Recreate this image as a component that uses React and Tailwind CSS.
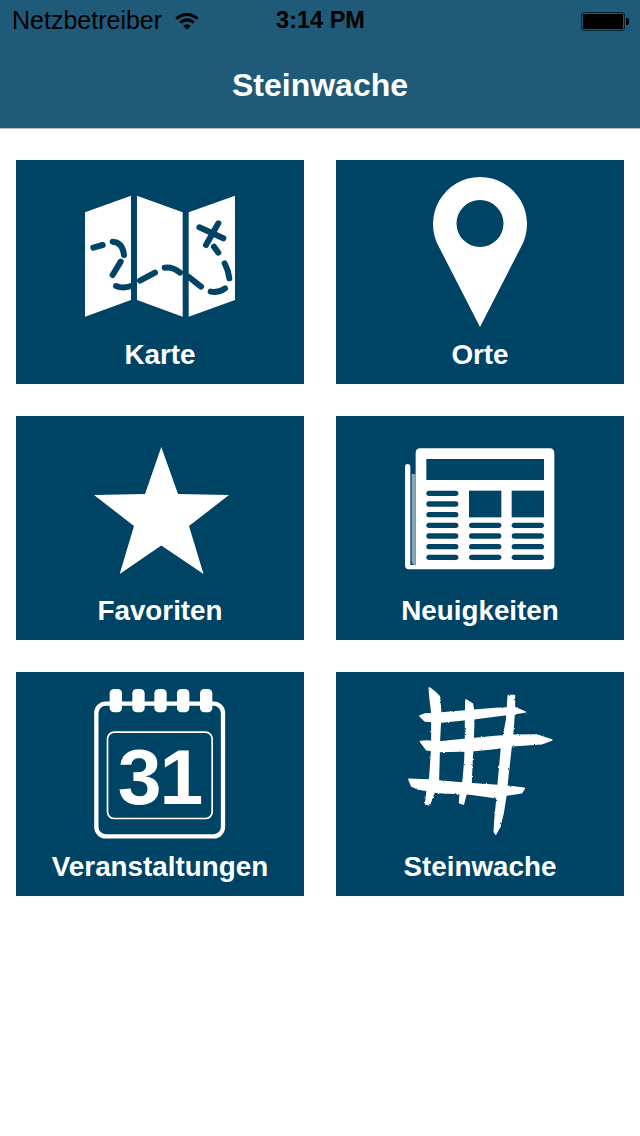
import React from 'react';

const font = "font-['Liberation_Sans',Arial,sans-serif]";

function MapIcon() {
  return (
    <svg viewBox="0 0 540 450" className="w-[180px] h-[150px] mt-[20px]">
      <polygon fill="#fff" points="45,97 183,47 183,360 45,410" />
      <polygon fill="#fff" points="201,47 338,97 338,410 201,360" />
      <polygon fill="#fff" points="356,97 495,47 495,360 356,410" />
      <g fill="none" stroke="#004465" strokeWidth="18" strokeLinecap="round">
        <path d="M70 203L98 195" />
        <path d="M128 185Q158 187 162 225" />
        <path d="M152 245L128 285" />
        <path d="M138 318Q160 328 190 316" />
        <path d="M210 302L255 278" />
        <path d="M284 263Q308 260 330 278" />
        <path d="M355 290L393 320" />
        <path d="M422 335Q445 340 465 325" />
        <path d="M478 295Q475 270 464 250" />
        <path d="M445 218L432 200" />
        <path d="M388 142L460 175" />
        <path d="M445 130L408 195" />
      </g>
    </svg>
  );
}

function PinIcon() {
  return (
    <svg viewBox="0 0 94 150" className="w-[94px] h-[150px] mt-[17px]">
      <path
        fill="#fff"
        fillRule="evenodd"
        d="M47 150L6 70A47 47 0 1 1 88 70ZM47 23A23.500 23.500 0 1 0 47 70A23.500 23.500 0 1 0 47 23Z"
      />
    </svg>
  );
}

function StarIcon() {
  return (
    <svg viewBox="94 447 135 127" className="w-[135px] h-[127px] mt-[31px] ml-[3px]">
      <polygon
        fill="#fff"
        points="161.300,447 178,494 229,495 189,526 203.500,574 161.300,545.500 119.700,574 134,526 94,495 145,494"
      />
    </svg>
  );
}

function NewsIcon() {
  const leftLines = [152, 184, 216, 248, 280, 312, 344];
  const sideLines = [248, 280, 312, 344];
  return (
    <svg viewBox="0 0 510 420" className="w-[170px] h-[140px] mt-[24px]">
      <path
        fill="#fff"
        d="M38 72Q46 72 46 80V375H62V39Q62 25 76 25H464Q478 25 478 39V376Q478 388 466 388H42Q30 388 30 376V80Q30 72 38 72Z"
      />
      <path fill="#8ba8b9" d="M50 102H62V375Q50 375 50 363Z" />
      <g fill="#004465">
        <rect x="94" y="57" width="353" height="63" />
        <rect x="222" y="152" width="97" height="80" />
        <rect x="350" y="152" width="97" height="80" />
        {leftLines.map((y) => (
          <rect key={y} x="94" y={y} width="96" height="16" rx="8" />
        ))}
        {sideLines.map((y) => (
          <rect key={y} x="222" y={y} width="97" height="16" rx="8" />
        ))}
        {sideLines.map((y) => (
          <rect key={y} x="350" y={y} width="97" height="16" rx="8" />
        ))}
      </g>
    </svg>
  );
}

function CalendarIcon() {
  const rings = [74, 142, 208, 276, 345];
  return (
    <svg viewBox="0 0 450 510" className="w-[150px] h-[170px] mt-[8px]">
      <rect x="34" y="71" width="380" height="398" rx="28" fill="none" stroke="#fff" strokeWidth="13" />
      <rect x="67.500" y="156.500" width="314" height="259" rx="20" fill="none" stroke="#fff" strokeWidth="5" />
      {rings.map((x) => (
        <rect key={x} x={x} y="27" width="37" height="70" rx="13" fill="#fff" />
      ))}
      <text
        x="98"
        y="373"
        fill="#fff"
        fontSize="236"
        fontWeight="700"
        letterSpacing="-6"
        fontFamily="Liberation Sans, Arial, sans-serif"
      >
        31
      </text>
    </svg>
  );
}

function GridIcon() {
  return (
    <svg viewBox="0 0 510 480" className="w-[170px] h-[160px] mt-[8px]">
      <defs>
        <filter id="rough" x="-5%" y="-5%" width="110%" height="110%">
          <feTurbulence type="fractalNoise" baseFrequency="0.14" numOctaves="2" seed="7" />
          <feDisplacementMap in="SourceGraphic" scale="6" />
        </filter>
      </defs>
      <g fill="#fff" stroke="#fff" strokeWidth="5" strokeLinejoin="round" filter="url(#rough)">
        <polygon points="103,24 118,35 133,50 137,100 133,180 130,300 118,335 103,374 92,372 97,330 105,290 111,200 111,100 105,50" />
        <polygon points="213,60 232,72 237,100 234,180 230,260 228,310 212,345 205,372 194,368 196,340 205,300 210,240 212,170 212,110" />
        <polygon points="340,47 358,47 358,90 352,170 347,210 337,300 332,350 324,400 314,440 302,462 298,455 300,420 305,370 311,300 320,200 335,120" />
        <polygon points="75,108 90,102 130,100 210,93 300,86 360,83 390,96 355,101 300,108 236,116 140,126 90,123" />
        <polygon points="77,185 95,183 130,186 215,178 300,170 360,166 425,165 470,180 440,191 350,197 300,205 230,212 130,214 95,209" />
        <polygon points="42,298 100,300 130,303 210,310 330,318 388,325 380,338 335,345 300,352 225,342 130,337 70,327 50,318" />
      </g>
    </svg>
  );
}

function WifiIcon() {
  return (
    <svg viewBox="0 0 24 17" className="w-[24px] h-[17px]">
      <path d="M12 16.800L8.200 12.700Q12 9.700 15.800 12.700Z" fill="#000" />
      <path d="M5.200 9.700Q12 4 18.800 9.700" fill="none" stroke="#000" strokeWidth="3" />
      <path d="M1.300 5.700Q12 -3 22.700 5.700" fill="none" stroke="#000" strokeWidth="3" />
    </svg>
  );
}

function Tile({ label, children }) {
  return (
    <div className="h-[224px] bg-[#004465] flex flex-col items-center">
      <div className="h-[177px] flex justify-center items-start">{children}</div>
      <div className="text-white font-bold text-[27.8px] leading-[36px]">{label}</div>
    </div>
  );
}

export default function App() {
  const tiles = [
    { label: 'Karte', icon: <MapIcon /> },
    { label: 'Orte', icon: <PinIcon /> },
    { label: 'Favoriten', icon: <StarIcon /> },
    { label: 'Neuigkeiten', icon: <NewsIcon /> },
    { label: 'Veranstaltungen', icon: <CalendarIcon /> },
    { label: 'Steinwache', icon: <GridIcon /> },
  ];

  return (
    <div className={`w-[640px] h-[1136px] bg-white overflow-hidden ${font}`}>
      <header className="h-[129px] bg-[#1f5a78] border-b border-[#b5b9bb]">
        <div className="h-[40px] pt-[2px] pl-[12px] pr-[11px] grid grid-cols-3 items-center text-black">
          <div className="flex items-center gap-[13px] text-[25px] whitespace-nowrap">
            <span>Netzbetreiber</span>
            <WifiIcon />
          </div>
          <div className="text-center font-bold text-[23.5px] whitespace-nowrap">3:14 PM</div>
          <div className="flex justify-end items-center gap-[1px]">
            <div className="w-[44px] h-[19px] rounded-[3px] border border-[#00243a] p-[1px]">
              <div className="h-full rounded-[1px] bg-black"></div>
            </div>
            <div className="w-[3px] h-[7px] bg-black rounded-r-[2px]"></div>
          </div>
        </div>
        <h1 className="text-white text-center font-bold text-[32px] leading-[90px]">Steinwache</h1>
      </header>
      <main className="grid grid-cols-2 gap-x-8 gap-y-8 px-4 pt-[31px]">
        {tiles.map((tile) => (
          <Tile key={tile.label} label={tile.label}>
            {tile.icon}
          </Tile>
        ))}
      </main>
    </div>
  );
}
